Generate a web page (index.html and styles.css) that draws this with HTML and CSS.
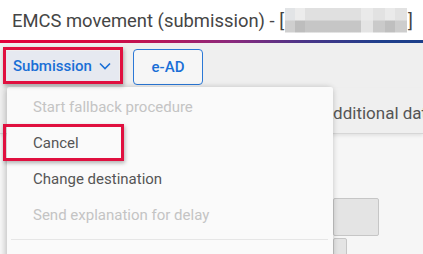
FILE: index.html
```html
<!DOCTYPE html>
<html lang="en">
<head>
    <meta charset="UTF-8">
    <title>EMCS movement</title>
    <link rel="stylesheet" href="styles.css">
</head>
<body>
    <header class="title-bar">
        <h1>EMCS movement (submission) - [<span class="masked"></span>]</h1>
    </header>
    <div class="brand-line"></div>

    <div class="page">
        <div class="toolbar">
            <button class="menu-btn">Submission
                <svg width="12" height="8" viewBox="0 0 12 8"><path d="M1 1.5 L6 6.5 L11 1.5" fill="none" stroke="#1a6fd6" stroke-width="1.6"/></svg>
            </button>
            <button class="outline-btn">e-AD</button>
        </div>

        <div class="tabs">
            <span class="tab">Additional data</span>
        </div>

        <div class="content">
            <div class="field big"></div>
            <div class="field small"></div>
        </div>

        <!-- dropdown of the Submission button -->
        <div class="dropdown">
            <div class="item disabled">Start fallback procedure</div>
            <div class="item">Cancel</div>
            <div class="item">Change destination</div>
            <div class="item disabled">Send explanation for delay</div>
            <div class="divider"></div>
        </div>

        <!-- highlight marks -->
        <div class="mark mark-submission"></div>
        <div class="mark mark-cancel"></div>
    </div>
</body>
</html>
```

FILE: styles.css
```css
* {
    margin: 0;
    padding: 0;
    box-sizing: border-box;
}

body {
    font-family: 'Roboto', 'Liberation Sans', sans-serif;
    background: #f6f6f6;
    overflow: hidden;
}

.title-bar {
    background: white;
    height: 40px;
    padding-left: 12px;
    display: flex;
    align-items: center;
}

.title-bar h1 {
    font-size: 18.4px;
    font-weight: 400;
    color: #454545;
    display: flex;
    align-items: center;
}

.masked {
    display: inline-block;
    width: 122px;
    height: 25px;
    margin: 0 1px;
    background:
        linear-gradient(90deg, #e2e4e6 0 8%, #ececec 8% 16%, #e0e0e0 16% 62%, #eaeaea 62% 72%, #e2e2e2 72% 82%, #eaeaea 82% 90%, #e2e2e2 90%) top / 100% 50% no-repeat,
        linear-gradient(90deg, #cfcfcf 0 8%, #bdbdbd 8% 16%, #c6c6c6 16% 62%, #e4e4e4 62% 72%, #cacaca 72% 82%, #bfbfbf 82% 90%, #cdcdcd 90%) bottom / 100% 50% no-repeat;
}

.brand-line {
    height: 3px;
    background: linear-gradient(90deg, #e2003a 0%, #d40a42 25%, #8a2a7e 55%, #4a3588 72%, #1f3f8c 90%, #1c3f8a 100%);
}

.page {
    position: relative;
    height: 211px;
    overflow: hidden;
}

.toolbar {
    height: 45px;
    background: #efefef;
    display: flex;
    align-items: center;
    gap: 14px;
    padding-left: 6px;
}

.menu-btn {
    height: 30px;
    width: 113px;
    border: none;
    background: #e6e9f0;
    color: #1a6fd6;
    font-family: inherit;
    font-size: 15px;
    font-weight: 500;
    display: flex;
    align-items: center;
    gap: 7px;
    padding-left: 7px;
}

.outline-btn {
    height: 36px;
    width: 70px;
    border: 1px solid #2b78d6;
    border-radius: 4px;
    background: #f6f6f6;
    color: #1a6fd6;
    font-family: inherit;
    font-size: 15px;
    font-weight: 500;
    margin-top: 2px;
}

.tabs {
    height: 46px;
    background: #efefef;
    border-bottom: 1px solid #d6d6d6;
    box-shadow: 0 2px 3px rgba(0, 0, 0, 0.08);
    display: flex;
    align-items: center;
    padding-left: 322px;
    white-space: nowrap;
}

.tab {
    font-size: 17px;
    color: #555;
    margin-top: 4px;
}

.content {
    padding: 64px 0 0 333px;
    display: flex;
    flex-direction: column;
    gap: 2px;
}

.field {
    background: #e4e4e4;
    border: 1px solid #c6c6c6;
    border-radius: 2px;
}

.field.big {
    width: 46px;
    height: 38px;
}

.field.small {
    width: 14px;
    height: 20px;
}

.dropdown {
    position: absolute;
    left: 7px;
    top: 44px;
    width: 326px;
    height: 200px;
    background: #fafafa;
    padding-top: 2px;
    box-shadow: -2px 0 6px rgba(0, 0, 0, 0.12), 0 2px 6px rgba(0, 0, 0, 0.15);
    border-radius: 2px 2px 0 0;
}

.item {
    height: 36px;
    line-height: 36px;
    padding-left: 26px;
    font-size: 15px;
    color: #555;
}

.item.disabled {
    color: #c4c4c4;
}

.divider {
    margin: 6px 5px 0 4px;
    border-top: 1px solid #e6e6e6;
}

.mark {
    position: absolute;
    border: 3px solid #e0103f;
    box-shadow: 1px 2px 4px rgba(0, 0, 0, 0.3);
}

.mark-submission {
    left: 3px;
    top: 4px;
    width: 120px;
    height: 37px;
}

.mark-cancel {
    left: 3px;
    top: 81px;
    width: 121px;
    height: 37px;
}
```
